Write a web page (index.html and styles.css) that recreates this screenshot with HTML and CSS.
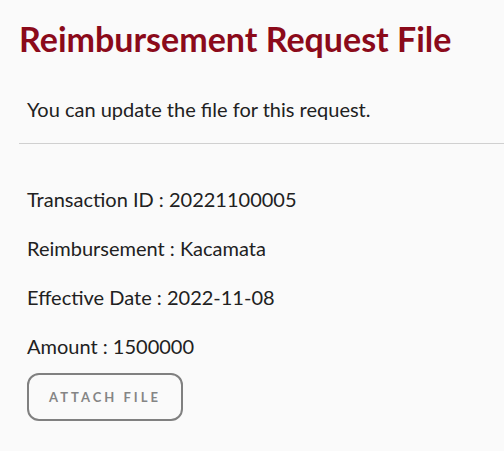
FILE: index.html
```html
<!DOCTYPE html>
<html>
<head>
<meta charset="utf-8">
<link rel="stylesheet" href="styles.css">
</head>
<body>
<div class="page">
  <h1 class="title">Reimbursement Request File</h1>
  <p class="intro">You can update the file for this request.</p>
  <hr class="divider">
  <div class="details">
    <p class="row">Transaction ID : 20221100005</p>
    <p class="row">Reimbursement : Kacamata</p>
    <p class="row">Effective Date : 2022-11-08</p>
    <p class="row">Amount : 1500000</p>
    <button class="attach">ATTACH FILE</button>
  </div>
</div>
</body>
</html>
```
FILE: styles.css
```css
html, body {
  margin: 0;
  padding: 0;
  background: #fafafa;
}
body {
  font-family: Lato, "Open Sans", sans-serif;
  color: #212121;
}
.page {
  padding-left: 19px;
}
.title {
  margin: 0;
  padding-top: 18px;
  font-size: 34px;
  font-weight: 700;
  line-height: 42px;
  color: #8b0a1a;
}
.intro {
  margin: 0;
  padding: 37px 0 0 8px;
  font-size: 20px;
  line-height: 24px;
}
.divider {
  margin: 22px 0 0 0;
  border: 0;
  border-top: 1px solid #d0d0d0;
  height: 0;
}
.details {
  display: flex;
  flex-direction: column;
  align-items: flex-start;
  gap: 25px;
  padding: 43px 0 0 8px;
}
.row {
  margin: 0;
  font-size: 20px;
  line-height: 24px;
}
.attach {
  margin-top: -10px;
  width: 156px;
  height: 48px;
  border: 2px solid #808080;
  border-radius: 12px;
  background: transparent;
  font-family: Lato, sans-serif;
  font-weight: 700;
  font-size: 13px;
  letter-spacing: 3px;
  color: #858585;
  padding: 0;
}
```
